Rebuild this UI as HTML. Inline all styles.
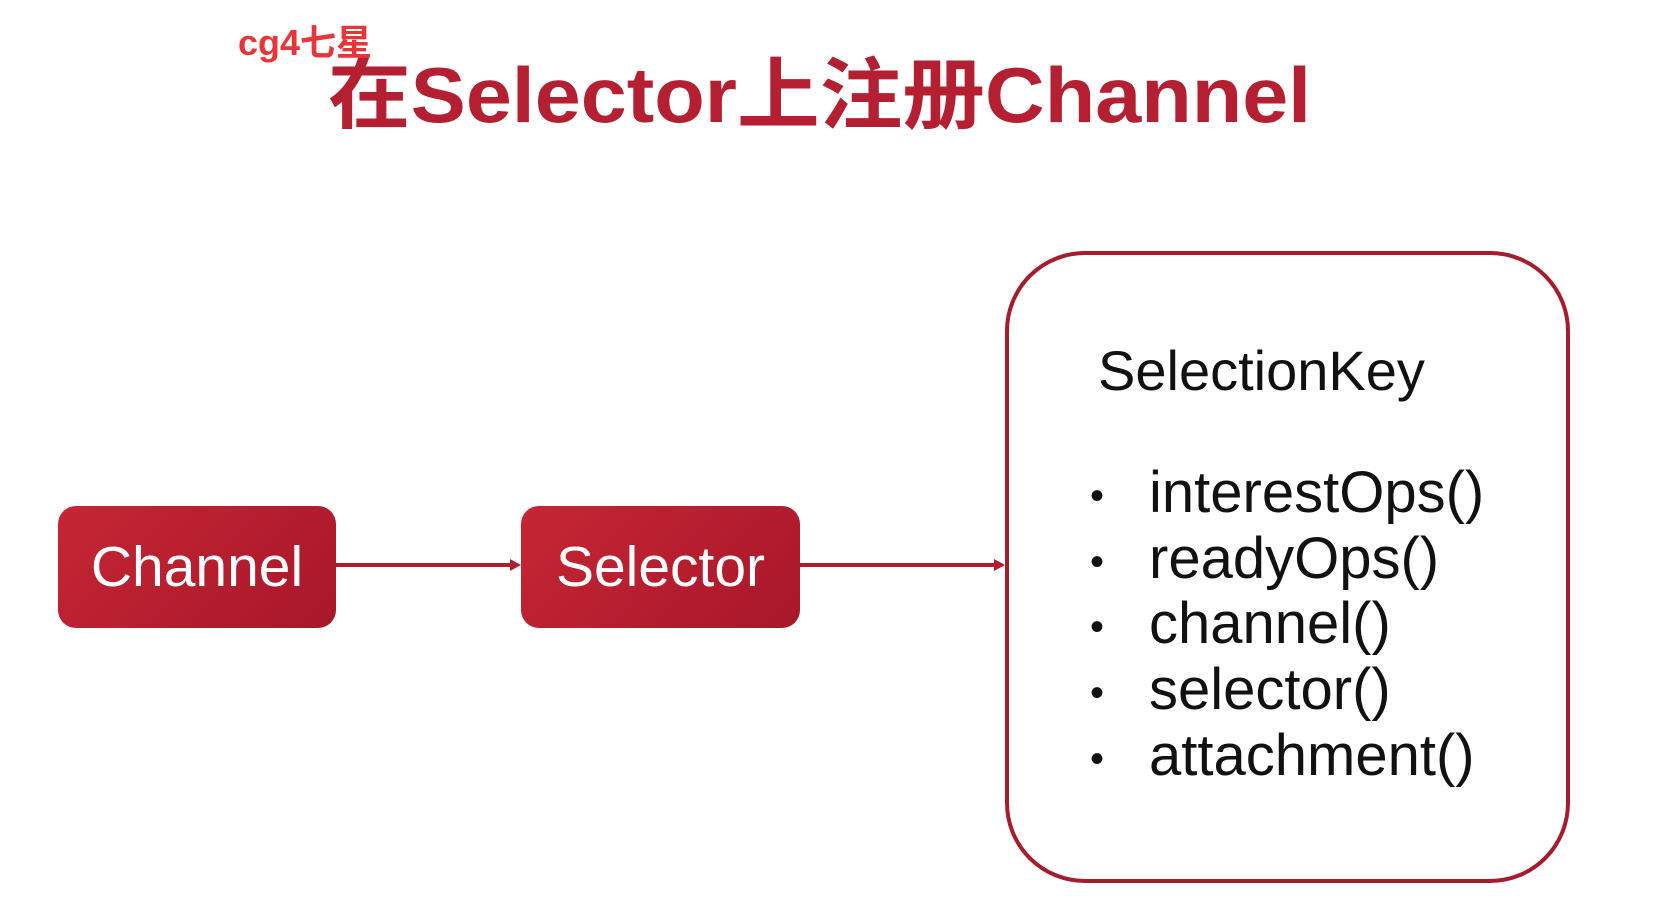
<!DOCTYPE html>
<html><head><meta charset="utf-8"><style>
html,body{margin:0;padding:0;background:#fff;}
body{width:1668px;height:910px;position:relative;overflow:hidden;font-family:"Liberation Sans","Noto Sans CJK SC",sans-serif;}
.wm{position:absolute;left:238px;top:14px;font-size:36px;font-weight:bold;color:#e8353a;}
.title{position:absolute;left:328px;top:33px;font-size:78px;font-weight:bold;color:#b41f32;white-space:nowrap;transform-origin:0 0;transform:scaleX(1.06);}
.box{position:absolute;top:506px;height:122px;border-radius:18px;background:linear-gradient(135deg,#c62634,#a8172a);color:#fff;font-size:57px;display:flex;align-items:center;justify-content:center;}
.big{position:absolute;left:1005px;top:251px;width:557px;height:624px;border:4px solid #a51c2c;border-radius:80px;}
.t{position:absolute;color:#111;font-size:58px;white-space:nowrap;}
.b{position:absolute;left:1090px;font-size:40px;color:#111;}
</style></head><body>
<div class="title">在Selector上注册Channel</div>
<div class="wm">cg4七星</div>
<div class="box" style="left:58px;width:278px;">Channel</div>
<div class="box" style="left:521px;width:279px;">Selector</div>
<svg style="position:absolute;left:0;top:0" width="1668" height="910">
<line x1="336" y1="565" x2="512" y2="565" stroke="#b01d2e" stroke-width="4"/>
<polygon points="521,565 510,559 510,571" fill="#b01d2e"/>
<line x1="800" y1="565" x2="996" y2="565" stroke="#b01d2e" stroke-width="4"/>
<polygon points="1005,565 994,559 994,571" fill="#b01d2e"/>
</svg>
<div class="big"></div>
<div class="t" style="left:1098px;top:338px;font-size:56px;">SelectionKey</div>
<div class="t" style="left:1149px;top:459px;">interestOps()</div>
<div class="t" style="left:1149px;top:525px;">readyOps()</div>
<div class="t" style="left:1149px;top:590px;">channel()</div>
<div class="t" style="left:1149px;top:656px;">selector()</div>
<div class="t" style="left:1149px;top:722px;">attachment()</div>
<div class="b" style="top:474px;">•</div>
<div class="b" style="top:540px;">•</div>
<div class="b" style="top:605px;">•</div>
<div class="b" style="top:671px;">•</div>
<div class="b" style="top:737px;">•</div>
</body></html>
